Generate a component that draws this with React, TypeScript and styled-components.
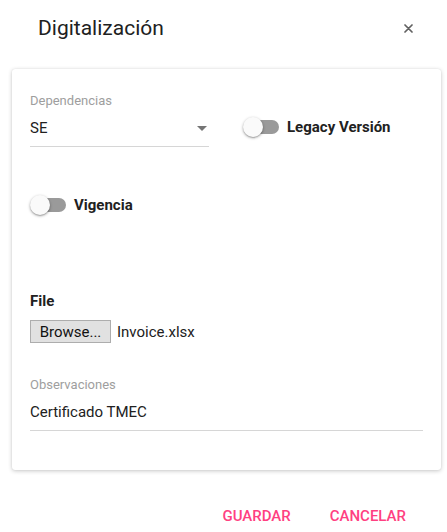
import React, { useState } from 'react';
import styled, { createGlobalStyle } from 'styled-components';

// Styles
const GlobalStyle = createGlobalStyle`
  body {
    margin: 0;
    background: #ffffff;
    font-family: Roboto, 'Liberation Sans', Arial, sans-serif;
    color: #212121;
  }
`;

const Dialog = styled.div`
  width: 447px;
  height: 532px;
  background: #ffffff;
  display: flex;
  flex-direction: column;
`;

const Header = styled.div`
  display: flex;
  align-items: center;
  justify-content: space-between;
  padding: 14px 31px 0 38px;
`;

const Title = styled.h2`
  margin: 0;
  font-size: 21px;
  line-height: 28px;
  font-weight: 400;
  color: #212121;
`;

const CloseButton = styled.button`
  width: 16px;
  height: 16px;
  padding: 0;
  border: none;
  background: transparent;
  display: flex;
  align-items: center;
  justify-content: center;
  cursor: pointer;
`;

const Card = styled.div`
  margin: 27px 6px 0 12px;
  padding: 24px 18px 39px 18px;
  background: #ffffff;
  border-radius: 3px;
  box-shadow: 0 1px 4px rgba(0, 0, 0, 0.22), 0 0 1px rgba(0, 0, 0, 0.12);
  display: flex;
  flex-direction: column;
`;

const Row = styled.div`
  display: flex;
  align-items: flex-start;
`;

const Field = styled.div<{ $width?: number }>`
  display: flex;
  flex-direction: column;
  width: ${(p) => (p.$width ? `${p.$width}px` : '100%')};
`;

const FieldLabel = styled.label`
  font-size: 13px;
  line-height: 16px;
  color: #9e9e9e;
`;

const FieldValue = styled.div`
  margin-top: 7px;
  height: 24px;
  padding-bottom: 6px;
  border-bottom: 1px solid #d6d6d6;
  display: flex;
  align-items: center;
  justify-content: space-between;
  font-size: 15px;
  line-height: 24px;
  color: #212121;
`;

const Arrow = styled.span`
  width: 0;
  height: 0;
  margin-right: 2px;
  border-left: 5px solid transparent;
  border-right: 5px solid transparent;
  border-top: 5px solid #757575;
`;

const SwitchLabel = styled.label<{ $offset?: number; $top?: number }>`
  display: flex;
  align-items: center;
  margin-left: ${(p) => p.$offset || 0}px;
  margin-top: ${(p) => p.$top || 0}px;
  cursor: pointer;
`;

const SwitchTrack = styled.span<{ $on: boolean }>`
  position: relative;
  width: 36px;
  height: 20px;
  flex-shrink: 0;

  &::before {
    content: '';
    position: absolute;
    left: 2px;
    top: 3px;
    width: 34px;
    height: 14px;
    border-radius: 7px;
    background: ${(p) => (p.$on ? '#ff80ab' : '#9a9a9a')};
  }
`;

const SwitchThumb = styled.span<{ $on: boolean }>`
  position: absolute;
  top: 0;
  left: ${(p) => (p.$on ? '16px' : '0')};
  width: 20px;
  height: 20px;
  border-radius: 50%;
  background: ${(p) => (p.$on ? '#ff4081' : '#fafafa')};
  box-shadow: 0 1px 3px rgba(0, 0, 0, 0.35), 0 1px 1px rgba(0, 0, 0, 0.14);
`;

const SwitchText = styled.span`
  margin-left: 8px;
  font-size: 15px;
  font-weight: 700;
  line-height: 20px;
  color: #212121;
`;

const SectionTitle = styled.div`
  margin-top: 77px;
  font-size: 15px;
  font-weight: 700;
  line-height: 18px;
`;

const FileRow = styled.div`
  margin-top: 10px;
  display: flex;
  align-items: center;
  gap: 6px;
`;

const BrowseButton = styled.span`
  width: 81px;
  height: 23px;
  box-sizing: border-box;
  border: 1px solid #adadad;
  background: #e1e1e1;
  display: flex;
  align-items: center;
  justify-content: center;
  font-size: 15px;
  color: #111;
`;

const FileName = styled.span`
  font-size: 15px;
  color: #212121;
`;

const Spacer = styled.div<{ $h: number }>`
  height: ${(p) => p.$h}px;
`;

const Actions = styled.div`
  display: flex;
  justify-content: flex-end;
  gap: 39px;
  padding: 37px 41px 0 0;
`;

const ActionButton = styled.button`
  padding: 0;
  border: none;
  background: transparent;
  font-family: inherit;
  font-size: 15px;
  font-weight: 500;
  line-height: 18px;
  color: #ff4081;
  cursor: pointer;
`;

// Component

const Toggle = ({
  label,
  offset,
  top,
}: {
  label: string;
  offset?: number;
  top?: number;
}) => {
  const [on, setOn] = useState(false);
  return (
    <SwitchLabel $offset={offset} $top={top} onClick={() => setOn(!on)}>
      <SwitchTrack $on={on}>
        <SwitchThumb $on={on} />
      </SwitchTrack>
      <SwitchText>{label}</SwitchText>
    </SwitchLabel>
  );
};

const App = () => {
  return (
    <Dialog>
      <GlobalStyle />
      <Header>
        <Title>Digitalización</Title>
        <CloseButton aria-label="close">
          <svg width="9" height="9" viewBox="0 0 9 9">
            <path
              d="M1 1 L8 8 M8 1 L1 8"
              stroke="#616161"
              strokeWidth="1.7"
              strokeLinecap="round"
            />
          </svg>
        </CloseButton>
      </Header>
      <Card>
        <Row>
          <Field $width={179}>
            <FieldLabel>Dependencias</FieldLabel>
            <FieldValue>
              SE
              <Arrow />
            </FieldValue>
          </Field>
          <Toggle label="Legacy Versión" offset={34} top={24} />
        </Row>
        <Spacer $h={48} />
        <Toggle label="Vigencia" />
        <SectionTitle>File</SectionTitle>
        <FileRow>
          <BrowseButton>Browse...</BrowseButton>
          <FileName>Invoice.xlsx</FileName>
        </FileRow>
        <Spacer $h={34} />
        <Field>
          <FieldLabel>Observaciones</FieldLabel>
          <FieldValue>Certificado TMEC</FieldValue>
        </Field>
      </Card>
      <Actions>
        <ActionButton>GUARDAR</ActionButton>
        <ActionButton>CANCELAR</ActionButton>
      </Actions>
    </Dialog>
  );
};

export default App;
